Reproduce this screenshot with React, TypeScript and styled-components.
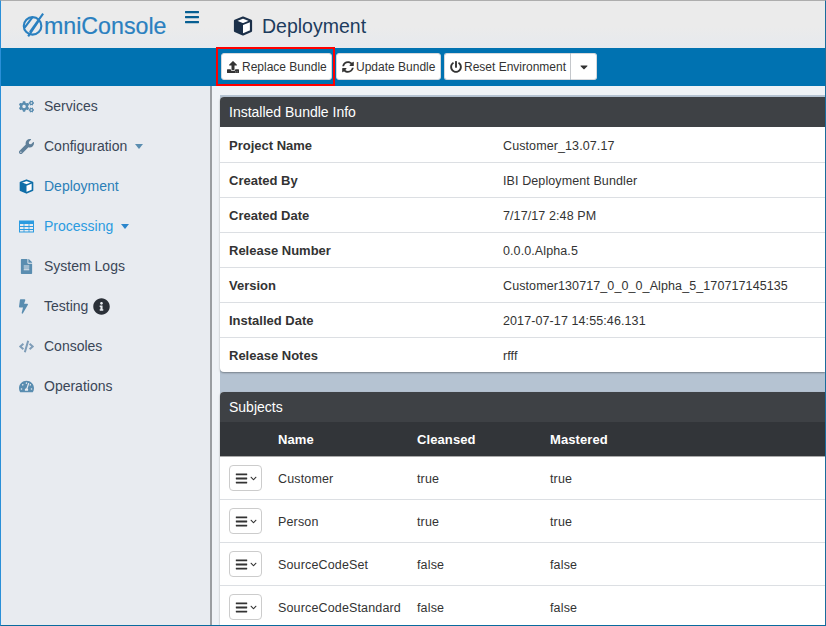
import React from "react";
import styled, { createGlobalStyle } from "styled-components";
import { FaCogs, FaWrench, FaFileAlt, FaBolt, FaCode, FaTachometerAlt, FaInfoCircle, FaBars, FaUpload, FaSyncAlt, FaPowerOff, FaCaretDown, FaChevronDown } from "react-icons/fa";

const Global = createGlobalStyle`
  html, body { margin: 0; padding: 0; height: 100%; overflow: hidden; }
  body { font-family: "Liberation Sans", Arial, sans-serif; }
`;

const Frame = styled.div`
  width: 826px; height: 626px; box-sizing: border-box; overflow: hidden;
  border-top: 1px solid #adadad; border-left: 1px solid #2a8fd8; border-bottom: 1px solid #0a6b9e; border-right: 1px solid #1a6d9c;
  display: flex; flex-direction: column; background: #e8ebf0;
`;
const Header = styled.header`
  height: 47px; flex: none; display: flex;
  background: linear-gradient(#ebebeb 0, #ebebeb 55%, #e6e9ee 100%);
`;
const Brand = styled.div`
  width: 183px; flex: none; display: flex; align-items: center; padding: 4px 0 0 21px; box-sizing: border-box;
  color: #2a80c0; font-size: 23.2px; line-height: 1; height: 47px; -webkit-text-stroke: 0.2px #2a80c0;
`;
const Logo = styled.svg`width: 22px; height: 26px; flex: none; margin-top: -3px;`;
const Burger = styled.div`
  width: 49px; flex: none; color: #075f92; padding-top: 8px; line-height: 0; box-sizing: border-box;
  svg { width: 16px; height: 16px; }
`;
const PageTitle = styled.div`
  display: flex; align-items: center; gap: 9px; color: #1d3c5e; font-size: 19.5px; padding-top: 3px;
`;
const TitleCube = styled.span`width: 20px; height: 20px; flex: none; display: block;`;
const ActionBar = styled.div`
  height: 38px; flex: none; background: #0072b1; display: flex; align-items: center; padding-left: 220px; gap: 4px; box-sizing: border-box; padding-bottom: 1px;
`;
const Highlight = styled.div`
  position: relative; display: flex;
  &::after { content: ""; position: absolute; inset: -6px -3px -6px -5px; border: 2.5px solid #f00; pointer-events: none; }
`;
const Btn = styled.button<{ $w?: number; $gap?: number }>`
  height: 27px; box-sizing: border-box; padding: 0 0 0 5px; background: #fff; border: 1px solid #d5d8dc; border-radius: 3px;
  width: ${(p) => (p.$w ? `${p.$w}px` : "auto")}; white-space: nowrap;
  display: flex; align-items: center; gap: ${(p) => p.$gap ?? 3}px; font: 12px "Liberation Sans", Arial, sans-serif; color: #333;
  svg { width: 12px; height: 12px; flex: none; }
`;
const SplitMain = styled(Btn)`border-radius: 3px 0 0 3px; border-right: 1px solid #c4c7cb;`;
const SplitCaret = styled(Btn)`border-radius: 0 3px 3px 0; border-left: 0; width: 26px; padding: 0; justify-content: center;`;
const Split = styled.div`display: flex; margin-left: -1px;`;
const Body = styled.div`flex: 1; display: flex; min-height: 0;`;
const Side = styled.nav`
  width: 211px; flex: none; box-sizing: border-box; background: #e8ebf0; border-right: 2px solid #9a9da1;
`;
const NavItem = styled.div<{ $color?: string; $icon?: string }>`
  height: 40px; display: flex; align-items: center; padding-left: 18px; font-size: 14px;
  color: ${(p) => p.$color || "#3a4657"};
  --icon: ${(p) => p.$icon || "#5a8db0"};
`;
const IconSlot = styled.span`
  width: 25px; flex: none; display: flex; align-items: center; color: var(--icon);
  svg { height: 15px; width: auto; display: block; }
`;
const BoltSlot = styled(IconSlot)`svg { width: 9px; height: 15px; }`;
const Caret = styled.span<{ $c: string }>`
  display: inline-block; margin-left: 8px; width: 0; height: 0; margin-top: 1px;
  border-left: 4.5px solid transparent; border-right: 4.5px solid transparent; border-top: 5px solid ${(p) => p.$c};
`;
const Info = styled(FaInfoCircle)`width: 17px; height: 17px; color: #2b3038; margin-left: 5px;`;
const Main = styled.main`
  flex: 1; min-width: 0; background: #eff2f6; padding: 9px 0 0 8px; display: flex; overflow: hidden;
`;
const Content = styled.div`
  flex: 1; min-width: 0; background: #b5c3d2; padding-top: 2px; display: flex; flex-direction: column; gap: 20px;
`;
const Panel = styled.section`
  background: #fff; border-radius: 4px 0 0 4px; box-shadow: 0 1px 2px rgba(0,0,0,.35); flex: none;
`;
const PanelTitle = styled.div`
  height: 30px; background: #3e4145; color: #fff; display: flex; align-items: center; padding-left: 9px;
  font-size: 14px; border-radius: 4px 0 0 0;
`;
const InfoRow = styled.div`
  height: 35px; box-sizing: border-box; display: grid; grid-template-columns: 274px 1fr; align-items: center; padding-left: 9px;
  font-size: 12.5px; line-height: 15px; color: #333; letter-spacing: .1px;
  border-top: 1px solid #dcdfe3;
  &:nth-child(2) { border-top-color: transparent; }
`;
const Label = styled.div`font-weight: 700; font-size: 13px; letter-spacing: 0; color: #333;`;
const InfoValue = styled.div`padding-top: 2px;`;
const SubjectHead = styled.div`
  height: 35px; box-sizing: border-box; background: #323539; color: #fff; font-weight: 700; font-size: 13px; letter-spacing: .1px;
  display: grid; grid-template-columns: 58px 139px 133px 1fr; align-items: center; border-bottom: 1px solid #aaa;
`;
const SubjectRow = styled.div`
  height: 43px; box-sizing: border-box; display: grid; grid-template-columns: 58px 139px 133px 1fr; align-items: center;
  font-size: 12.5px; line-height: 17px; color: #333; letter-spacing: .15px; border-bottom: 1px solid #dcdfe3;
`;
const MenuCell = styled.div`padding-left: 9px;`;
const SubjectCell = styled.div`padding-top: 2px;`;
const MenuBtn = styled.div`
  width: 33px; height: 26px; box-sizing: border-box; border: 1px solid #ccc; border-radius: 4px; display: flex; align-items: center;
  padding-left: 5px; gap: 2px; color: #333; background: #fff;
  svg:first-child { width: 13px; height: 13px; }
  svg:last-child { width: 7px; height: 7px; }
`;

const CubeGlyph = ({ left, edge }: { left: string; edge: string }) => (
  <svg viewBox="0 0 20 20" fill="none">
    <path d="M10 1.6 L18 4.8 V15 L10 18.4 L2 15 V4.8 Z" fill="#fff" stroke={edge} strokeWidth="2.2" strokeLinejoin="round" />
    <path d="M2 4.8 L10 8 V18.4 L2 15 Z" fill={left} />
    <path d="M2 4.8 L10 8 L18 4.8" stroke={edge} strokeWidth="1.8" />
  </svg>
);
const TableGlyph = () => (
  <svg viewBox="0 0 15 15">
    <path fillRule="evenodd" fill="currentColor" d="M0 1.5h15v12H0z M1 5h3.6v2H1z M5.4 5h4.2v2H5.4z M10.4 5H14v2h-3.6z M1 8h3.6v2H1z M5.4 8h4.2v2H5.4z M10.4 8H14v2h-3.6z M1 11h3.6v1.6H1z M5.4 11h4.2v1.6H5.4z M10.4 11H14v1.6h-3.6z" />
  </svg>
);

const bundle = [
  ["Project Name", "Customer_13.07.17"],
  ["Created By", "IBI Deployment Bundler"],
  ["Created Date", "7/17/17 2:48 PM"],
  ["Release Number", "0.0.0.Alpha.5"],
  ["Version", "Customer130717_0_0_0_Alpha_5_170717145135"],
  ["Installed Date", "2017-07-17 14:55:46.131"],
  ["Release Notes", "rfff"],
];
const subjects = [
  ["Customer", "true", "true"],
  ["Person", "true", "true"],
  ["SourceCodeSet", "false", "false"],
  ["SourceCodeStandard", "false", "false"],
];

export default function App() {
  return (
    <Frame>
      <Global />
      <Header>
        <Brand>
          <Logo viewBox="0 0 25 28" fill="none">
            <circle cx="12" cy="15" r="10" stroke="#2a80c0" strokeWidth="2.4" />
            <path d="M7 27 L19 9 M9 22 L24 1 M3 17 L12 5" stroke="#2a80c0" strokeWidth="2.4" />
          </Logo>
          mniConsole
        </Brand>
        <Burger><FaBars /></Burger>
        <PageTitle>
          <TitleCube><CubeGlyph left="#1c3049" edge="#1c3049" /></TitleCube>
          Deployment
        </PageTitle>
      </Header>
      <ActionBar>
        <Highlight><Btn $w={111}><FaUpload />Replace Bundle</Btn></Highlight>
        <Btn $w={105} $gap={2}><FaSyncAlt />Update Bundle</Btn>
        <Split>
          <SplitMain $w={127} $gap={2}><FaPowerOff />Reset Environment</SplitMain>
          <SplitCaret><FaCaretDown /></SplitCaret>
        </Split>
      </ActionBar>
      <Body>
        <Side>
          <NavItem><IconSlot><FaCogs /></IconSlot>Services</NavItem>
          <NavItem $icon="#5f7f99"><IconSlot><FaWrench /></IconSlot>Configuration<Caret $c="#5a8db0" /></NavItem>
          <NavItem $color="#2b7fb8" $icon="#0f6ea8"><IconSlot><CubeGlyph left="#0f6ea8" edge="#0f6ea8" /></IconSlot>Deployment</NavItem>
          <NavItem $color="#2b9be0" $icon="#2b9be0"><IconSlot><TableGlyph /></IconSlot>Processing<Caret $c="#2b86cc" /></NavItem>
          <NavItem><IconSlot><FaFileAlt /></IconSlot>System Logs</NavItem>
          <NavItem><BoltSlot><FaBolt /></BoltSlot>Testing<Info /></NavItem>
          <NavItem $icon="#7f9db8"><IconSlot><FaCode /></IconSlot>Consoles</NavItem>
          <NavItem><IconSlot><FaTachometerAlt /></IconSlot>Operations</NavItem>
        </Side>
        <Main>
          <Content>
            <Panel>
              <PanelTitle>Installed Bundle Info</PanelTitle>
              {bundle.map(([k, v]) => (
                <InfoRow key={k}><Label>{k}</Label><InfoValue>{v}</InfoValue></InfoRow>
              ))}
            </Panel>
            <Panel>
              <PanelTitle>Subjects</PanelTitle>
              <SubjectHead><div /><div>Name</div><div>Cleansed</div><div>Mastered</div></SubjectHead>
              {subjects.map(([a, b, c]) => (
                <SubjectRow key={a}>
                  <MenuCell><MenuBtn><FaBars /><FaChevronDown /></MenuBtn></MenuCell>
                  <SubjectCell>{a}</SubjectCell><SubjectCell>{b}</SubjectCell><SubjectCell>{c}</SubjectCell>
                </SubjectRow>
              ))}
            </Panel>
          </Content>
        </Main>
      </Body>
    </Frame>
  );
}
